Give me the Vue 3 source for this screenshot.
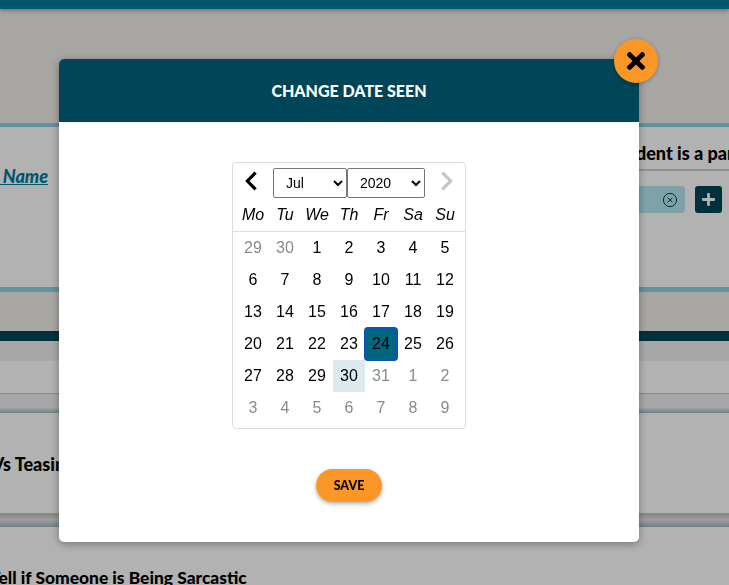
<template>
  <div class="page">
    <div class="top-bar"></div>
    <div class="banner"></div>
    <section class="form-row">
      <div class="form-left">
        <a class="name-link">Student Name</a>
      </div>
      <div class="form-right">
        <div class="right-title">Incident is a parent concern</div>
        <div class="right-field">
          <div class="chip">
            <svg class="chip-x" viewBox="0 0 16 16" width="16" height="16">
              <circle cx="8" cy="8" r="6.6" fill="none" stroke="#00455a" stroke-width="1" />
              <path d="M5.6 5.6l4.8 4.8M10.4 5.6l-4.8 4.8" stroke="#00455a" stroke-width="1" />
            </svg>
          </div>
          <button class="add-btn">
            <svg viewBox="0 0 448 448" width="13" height="13">
              <path
                fill="#fff"
                d="M416 176H272V32c0-17.67-14.33-32-32-32h-32c-17.67 0-32 14.33-32 32v144H32c-17.67 0-32 14.33-32 32v32c0 17.67 14.33 32 32 32h144v144c0 17.67 14.33 32 32 32h32c17.67 0 32-14.33 32-32V272h144c17.67 0 32-14.33 32-32v-32c0-17.67-14.33-32-32-32z"
              />
            </svg>
          </button>
        </div>
      </div>
    </section>
    <div class="banner banner-low"></div>
    <div class="dark-bar"></div>
    <div class="sub-bar"></div>
    <div class="list-gap"></div>
    <div class="divider"></div>
    <div class="list-item item-tall">Bullying Vs Teasing</div>
    <div class="divider divider-thin"></div>
    <div class="list-item item-last">How to Tell if Someone is Being Sarcastic</div>
  </div>

  <div class="overlay">
    <div class="modal">
      <button class="close-btn" aria-label="Close">
        <svg viewBox="0 80 352 352" width="18" height="18">
          <path
            fill="#000"
            d="M242.72 256l100.07-100.07c12.28-12.28 12.28-32.19 0-44.48l-22.24-22.24c-12.28-12.28-32.19-12.28-44.48 0L176 189.28 75.93 89.21c-12.28-12.28-32.19-12.28-44.48 0L9.21 111.45c-12.28 12.28-12.28 32.19 0 44.48L109.28 256 9.21 356.07c-12.28 12.28-12.28 32.19 0 44.48l22.24 22.24c12.28 12.28 32.2 12.28 44.48 0L176 322.72l100.07 100.07c12.28 12.28 32.2 12.28 44.48 0l22.24-22.24c12.28-12.28 12.28-32.19 0-44.48L242.72 256z"
          />
        </svg>
      </button>
      <header class="modal-head">CHANGE DATE SEEN</header>
      <div class="modal-body">
        <div class="calendar">
          <div class="cal-nav">
            <button class="nav-arrow nav-prev">
              <svg viewBox="0 0 14 20" width="14" height="20">
                <path d="M11.6 1.6L3.4 10l8.2 8.4" fill="none" stroke="#000" stroke-width="3.2" />
              </svg>
            </button>
            <select class="cal-select month-select">
              <option v-for="m in months" :key="m" :selected="m === 'Jul'">{{ m }}</option>
            </select>
            <select class="cal-select year-select">
              <option v-for="y in years" :key="y" :selected="y === 2020">{{ y }}</option>
            </select>
            <button class="nav-arrow nav-next">
              <svg viewBox="0 0 14 20" width="14" height="20">
                <path d="M2.4 1.6l8.2 8.4-8.2 8.4" fill="none" stroke="#c4c4c4" stroke-width="3.2" />
              </svg>
            </button>
          </div>
          <div class="weekdays">
            <span v-for="d in weekdays" :key="d">{{ d }}</span>
          </div>
          <div class="days">
            <div
              v-for="day in days"
              :key="day.key"
              class="day"
              :class="{ muted: day.muted, selected: day.selected, today: day.today }"
            >{{ day.n }}</div>
          </div>
        </div>
        <button class="save-btn">SAVE</button>
      </div>
    </div>
  </div>
</template>

<script setup>
const months = ["Jan", "Feb", "Mar", "Apr", "May", "Jun", "Jul", "Aug", "Sep", "Oct", "Nov", "Dec"];
const years = [2018, 2019, 2020, 2021];
const weekdays = ["Mo", "Tu", "We", "Th", "Fr", "Sa", "Su"];

const days = [];
const add = (n, muted) => days.push({
  key: days.length,
  n,
  muted,
  selected: !muted && n === 24,
  today: !muted && n === 30,
});
[29, 30].forEach((n) => add(n, true));
for (let n = 1; n <= 30; n++) add(n, false);
add(31, true);
for (let n = 1; n <= 9; n++) add(n, true);
</script>

<style>
html,
body {
  margin: 0;
  overflow: hidden;
}
</style>

<style scoped>
.page {
  height: 585px;
  overflow: hidden;
  background: #fff;
  font-family: "Lato", "Open Sans", sans-serif;
  font-weight: 900;
  color: #000;
}

.top-bar {
  position: relative;
  z-index: 20;
  height: 9px;
  background: #00586e;
  box-shadow: 0 1px 5px rgba(0, 0, 0, 0.4);
}

.banner {
  height: 114px;
  background: #f0eeea;
}

.banner-low {
  height: 40px;
  box-sizing: border-box;
  border-top: 1px solid #c4c4c4;
}

.form-row {
  display: flex;
  justify-content: space-between;
  height: 160px;
  border-top: 4px solid #88d3e2;
  border-bottom: 4px solid #88d3e2;
}

.form-left {
  width: 48px;
  direction: rtl;
  white-space: nowrap;
  overflow: hidden;
  padding-top: 38px;
  font-size: 18px;
  font-style: italic;
  flex-shrink: 0;
}

.name-link {
  display: inline-block;
  direction: ltr;
  color: #007e9d;
  text-decoration: underline;
}

.form-right {
  width: 122px;
  flex-shrink: 0;
  padding-top: 15px;
}

.right-title {
  height: 27px;
  font-size: 18px;
  line-height: 22px;
  white-space: nowrap;
  overflow: hidden;
  border-bottom: 2px solid #cfcfcf;
}

.right-field {
  display: flex;
  gap: 10px;
  margin-top: 15px;
  padding-right: 7px;
}

.chip {
  flex: 1;
  height: 27px;
  display: flex;
  align-items: center;
  justify-content: flex-end;
  padding-right: 7px;
  border-radius: 4px;
  background: #b5e9f1;
}

.add-btn {
  width: 27px;
  height: 27px;
  padding: 0;
  display: flex;
  align-items: center;
  justify-content: center;
  border: 0;
  border-radius: 3px;
  background: #004558;
}

.dark-bar {
  height: 10px;
  background: #00455a;
}

.sub-bar {
  height: 20px;
  background: #f0f0f0;
}

.list-gap {
  height: 32px;
}

.divider {
  height: 20px;
  box-sizing: border-box;
  border-top: 1px solid #c4c4c4;
  background: linear-gradient(#f0f0f0 70%, #9fb7bd);
}

.divider-thin {
  height: 14px;
  background: linear-gradient(#c0c0c0, #e2e2e2 45%, #9fb7bd);
}

.list-item {
  white-space: nowrap;
  font-size: 18px;
}

.item-tall {
  height: 100px;
  padding-top: 40px;
  margin-left: -77px;
  box-sizing: border-box;
}

.item-last {
  padding-top: 40px;
  margin-left: -71px;
  font-size: 17.4px;
}

.overlay {
  position: fixed;
  inset: 0;
  z-index: 10;
  background: rgba(0, 0, 0, 0.3);
}

.modal {
  position: relative;
  width: 580px;
  height: 483px;
  margin: 59px 0 0 59px;
  border-radius: 5px;
  background: #fff;
  box-shadow: 0 2px 8px rgba(0, 0, 0, 0.35);
  font-family: "Lato", "Open Sans", sans-serif;
}

.close-btn {
  position: absolute;
  top: -20px;
  right: -19px;
  width: 44px;
  height: 44px;
  padding: 0;
  display: flex;
  align-items: center;
  justify-content: center;
  border: 0;
  border-radius: 50%;
  background: #fb9726;
  box-shadow: 0 1px 4px rgba(0, 0, 0, 0.3);
}

.modal-head {
  height: 63px;
  display: flex;
  align-items: center;
  justify-content: center;
  border-radius: 5px 5px 0 0;
  background: #004558;
  color: #fff;
  font-size: 16px;
  font-weight: 900;
}

.modal-body {
  display: flex;
  flex-direction: column;
  align-items: center;
  padding-top: 40px;
}

.calendar {
  width: 234px;
  height: 267px;
  box-sizing: border-box;
  padding: 5px 4px 0;
  border: 1px solid #ddd;
  border-radius: 4px;
  font-family: "Liberation Sans", Arial, sans-serif;
  font-weight: 400;
  font-size: 16px;
}

.cal-nav {
  display: flex;
  align-items: center;
  height: 30px;
}

.nav-arrow {
  width: 36px;
  height: 30px;
  padding: 0 0 4px;
  display: flex;
  align-items: center;
  border: 0;
  background: none;
}

.nav-prev {
  padding-left: 7px;
}

.nav-next {
  padding-left: 15px;
}

.cal-select {
  height: 30px;
  padding: 0 0 0 8px;
  border: 1px solid #767676;
  border-radius: 2px;
  background: #fff;
  color: #000;
  font-family: "Liberation Sans", Arial, sans-serif;
  font-size: 14px;
}

.month-select {
  width: 74px;
}

.year-select {
  width: 78px;
}

.weekdays {
  display: grid;
  grid-template-columns: repeat(7, 32px);
  height: 33px;
  margin: 0 -4px;
  padding: 0 4px;
  line-height: 33px;
  text-align: center;
  font-style: italic;
  border-bottom: 1px solid #ddd;
}

.days {
  display: grid;
  grid-template-columns: repeat(7, 32px);
  grid-auto-rows: 32px;
}

.day {
  display: flex;
  align-items: center;
  justify-content: center;
}

.muted {
  color: #8a8a8a;
}

.today {
  background: #dceaef;
}

.selected {
  position: relative;
  z-index: 1;
  border-radius: 3px;
  background: #00667f;
  box-shadow: 0 0 0 1px #0a52bd, inset 0 0 0 1px #0a52bd;
}

.save-btn {
  width: 66px;
  height: 33px;
  margin-top: 40px;
  padding: 0;
  border: 0;
  border-radius: 17px;
  background: #fb9726;
  box-shadow: 0 2px 4px rgba(0, 0, 0, 0.3);
  color: #000;
  font-family: "Lato", "Open Sans", sans-serif;
  font-size: 12.5px;
  font-weight: 900;
}
</style>
